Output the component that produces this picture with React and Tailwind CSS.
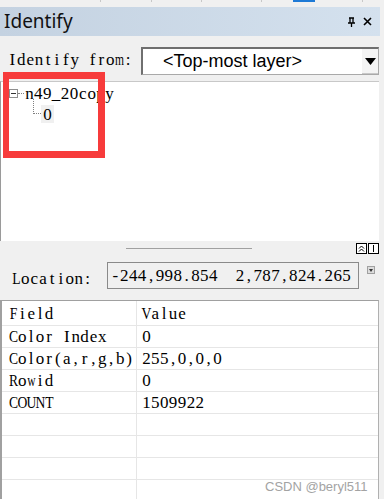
import React from "react";

// SimSun-like look: serif glyphs on a fixed half-width grid
const Sim = ({ text, className = "" }) => (
  <span className={`inline-flex whitespace-pre font-['Liberation_Serif',serif] text-[17px] leading-none text-black ${className}`}>
    {[...text].map((c, i) => (
      <span
        key={i}
        className={`inline-flex w-[8.9px] justify-center ${
          /[mwM@W]/.test(c) ? "scale-x-[0.68]" : /[A-HJ-Z]/.test(c) ? "scale-x-[0.8]" : ""
        }`}
      >
        {c}
      </span>
    ))}
  </span>
);

const rows = [
  ["Field", "Value"],
  ["Color Index", "0"],
  ["Color(a,r,g,b)", "255,0,0,0"],
  ["Rowid", "0"],
  ["COUNT", "1509922"],
  ["", ""],
  ["", ""],
  ["", ""],
  ["", ""],
];

const PinIcon = () => (
  <svg width="9" height="10" viewBox="0 0 9 10">
    <path d="M2 1h5M3 1v5M6 1v5M1 6h7M4.5 6v4" stroke="#000" strokeWidth="1.3" fill="none" />
  </svg>
);

const CloseIcon = () => (
  <svg width="9" height="9" viewBox="0 0 9 9">
    <path d="M1 1l7 7M8 1l-7 7" stroke="#000" strokeWidth="1.6" />
  </svg>
);

const App = () => {
  return (
    <div className="relative w-[384px] h-[499px] overflow-hidden bg-[#f0f0f0]">
      {/* top strip with tab ticks */}
      <div className="flex h-[7px] items-start">
        <div className="ml-[100px] h-[2px] w-px bg-[#c8c8c8]" />
        <div className="ml-[50px] h-[2px] w-px bg-[#c8c8c8]" />
        <div className="ml-[49px] h-[2px] w-px bg-[#c8c8c8]" />
        <div className="ml-[59px] h-[2px] w-px bg-[#c8c8c8]" />
        <div className="ml-[31px] h-[2px] w-[22px] bg-[#1e7ad6]" />
        <div className="ml-[47px] h-[2px] w-px bg-[#c8c8c8]" />
      </div>

      {/* title bar */}
      <div className="mr-[4px] flex h-[29px] items-center bg-linear-to-r from-[#c4d2e1] to-[#d4e1ee] pl-[4px]">
        <span className="font-['Noto_Sans',sans-serif] text-[19px] leading-none text-[#111]">Identify</span>
        <div className="ml-auto mr-[8px] flex items-center gap-[7px]">
          <PinIcon />
          <CloseIcon />
        </div>
      </div>

      {/* identify from */}
      <div className="flex items-center pt-[11px]">
        <div className="w-[141px] pb-[4px] pl-[8px]">
          <Sim text="Identify from:" />
        </div>
        <div className="flex h-[28px] w-[238px] border border-[#a9a9a9] border-t-2 border-l-2 border-t-[#6f6f6f] border-l-[#6f6f6f] bg-white">
          <div className="flex flex-1 items-center pl-[20px] font-['Liberation_Sans',sans-serif] text-[18px] text-black">
            &lt;Top-most layer&gt;
          </div>
          <div className="flex w-[16px] items-center justify-center border-b border-[#c8c8c8] bg-[#f4f4f4]">
            <svg width="11" height="7" viewBox="0 0 11 7">
              <path d="M0 0h11L5.5 7z" fill="#000" />
            </svg>
          </div>
        </div>
      </div>

      {/* tree panel */}
      <div className="mt-[6px] h-[160px] w-[379px] border-t border-l border-t-[#c8c8c8] border-l-[#9a9a9a] bg-white pl-[8px] pt-[2px]">
        <div className="flex h-[18px] items-center">
          <div className="flex h-[9px] w-[9px] items-center justify-center border border-[#8f8f8f]">
            <div className="h-px w-[5px] bg-[#333]" />
          </div>
          <div className="w-[6px] border-t border-dotted border-[#808080]" />
          <Sim text="n49_20copy" className="pl-[1px]" />
        </div>
        <div className="-mt-[3px] ml-[24px] flex items-start">
          <div className="h-[15px] w-[8px] border-b border-l border-dotted border-[#808080]" />
          <span className="mt-[6px] flex h-[18px] items-center bg-[#f0f0f0] px-[2px]">
            <Sim text="0" />
          </span>
        </div>
      </div>

      {/* splitter */}
      <div className="flex h-[21px] items-start">
        <div className="ml-[126px] mt-[7px] h-px w-[126px] bg-[#a0a0a0]" />
        <div className="ml-auto mr-[5px] mt-[2px] flex gap-px">
          <div className="flex h-[11px] w-[11px] items-center justify-center border border-black bg-white">
            <svg width="7" height="7" viewBox="0 0 7 7">
              <path d="M1 3.5l2.5-2.5 2.5 2.5M1 6.5l2.5-2.5 2.5 2.5" stroke="#000" strokeWidth="1" fill="none" />
            </svg>
          </div>
          <div className="flex h-[11px] w-[11px] items-center justify-center border border-black bg-white">
            <div className="h-[7px] w-px bg-black" />
          </div>
        </div>
      </div>

      {/* location */}
      <div className="flex items-start">
        <div className="mt-[4px] w-[107px] pl-[12px]">
          <Sim text="Location:" />
        </div>
        <div className="flex h-[27px] w-[252px] items-center border border-[#8a8a8a] bg-[#f0f0f0] pl-[3px]">
          <Sim text="-244,998.854  2,787,824.265" />
        </div>
        <div className="ml-[8px] mt-[4px] flex h-[8px] w-[8px] items-center justify-center border border-[#a0a0a0] bg-[#dcdcdc]">
          <svg width="4" height="3" viewBox="0 0 4 3">
            <path d="M0 0h4L2 3z" fill="#333" />
          </svg>
        </div>
      </div>

      {/* attribute table */}
      <div className="mt-[10px] w-[379px] border-t border-l-2 border-r border-t-[#a0a0a0] border-l-[#a0a0a0] border-r-[#b0b0b0] bg-white">
        {rows.map(([field, value], i) => (
          <div
            key={i}
            className={`flex border-b border-[#e6e6e6] ${i === 0 ? "h-[25px]" : "h-[22px]"}`}
          >
            <div className="flex w-[135px] items-center border-r border-[#e6e6e6] pl-[7px]">
              <Sim text={field} />
            </div>
            <div className="flex flex-1 items-center pl-[5px]">
              <Sim text={value} />
            </div>
          </div>
        ))}
      </div>

      {/* red highlight annotation */}
      <div className="absolute left-[3px] top-[72px] h-[86px] w-[102px] border-[7px] border-l-[6px] border-[#f73b3b]" />

      {/* watermark */}
      <div className="absolute left-[265px] top-[477px] font-['Liberation_Sans',sans-serif] text-[13px] text-[#a3a3a3]">
        CSDN @beryl511
      </div>
    </div>
  );
};

export default App;
